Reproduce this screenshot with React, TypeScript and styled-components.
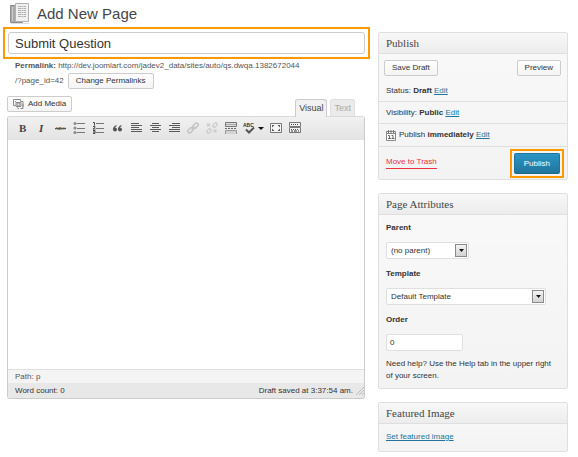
import React, { useState } from "react";
import styled, { createGlobalStyle, css } from "styled-components";

const GlobalStyle = createGlobalStyle`
  * { box-sizing: border-box; }
  body {
    margin: 0;
    background: #fff;
    color: #333;
    font: 8px/12px "Liberation Sans", Arial, sans-serif;
  }
  button, input, select { font-family: inherit; font-size: 8px; color: #333; margin: 0; }
  a { color: #21759b; }
  svg { display: block; }
`;

const Page = styled.div`
  padding: 0 10px 4px 3px;
`;

const PageHeader = styled.header`
  display: flex;
  align-items: center;
  gap: 7px;
  height: 27px;
  padding-left: 7px;
`;

const PageTitle = styled.h1`
  margin: 0;
  font-size: 15px;
  line-height: 24px;
  font-weight: 400;
  color: #464646;
`;

const Columns = styled.div`
  display: flex;
  align-items: flex-start;
  gap: 8px;
`;

const Main = styled.main`
  flex: 1;
  min-width: 0;
`;

const Highlight = styled.div`
  border: 2px solid #f90;
`;

const TitleHighlight = styled(Highlight)`
  padding: 3px;
`;

const TitleInput = styled.input`
  display: block;
  width: 100%;
  height: 22px;
  padding: 0 6px;
  border: 1px solid #ccc;
  border-radius: 3px;
  background: #fff;
  font-size: 13px;
  color: #333;
  outline: none;
`;

const Permalink = styled.div`
  padding: 0 12px;
  line-height: 14px;
  color: #555;
`;

const PermalinkRow = styled.div`
  display: flex;
  align-items: center;
  gap: 4px;
`;

const Button = styled.button<{ $icon?: boolean }>`
  display: inline-flex;
  align-items: center;
  justify-content: center;
  gap: 4px;
  height: 16px;
  padding: 0 ${(p) => (p.$icon ? 5 : 7)}px;
  border: 1px solid #ccc;
  border-radius: 2px;
  background: linear-gradient(#fefefe, #f4f4f4);
  line-height: 14px;
  white-space: nowrap;
`;

const EditorTools = styled.div`
  display: flex;
  justify-content: space-between;
  align-items: flex-start;
  height: 27px;
  padding: 7px 15px 0 4px;
`;

const Tabs = styled.div`
  display: flex;
  gap: 3px;
  padding-top: 3px;
`;

const Tab = styled.button<{ $active: boolean }>`
  position: relative;
  height: ${(p) => (p.$active ? 18 : 17)}px;
  padding: 0 3px;
  border: 1px solid ${(p) => (p.$active ? "#ccc" : "#dfdfdf")};
  border-bottom: 0;
  border-radius: 3px 3px 0 0;
  background: ${(p) => (p.$active ? "#f1f1f1" : "#ebebeb")};
  color: ${(p) => (p.$active ? "#444" : "#aaa")};
  font-size: 9px;
  line-height: 17px;
`;

const Editor = styled.section`
  margin: 0 5px 0 4px;
  border: 1px solid #ccc;
  border-top-color: #dadada;
  border-radius: 3px;
  overflow: hidden;
`;

const Toolbar = styled.div`
  display: flex;
  align-items: center;
  height: 23px;
  padding-left: 5px;
  background: linear-gradient(#f1f1f1, #e3e3e3);
`;

const ToolButton = styled.button<{ $menu?: boolean }>`
  display: flex;
  align-items: center;
  justify-content: center;
  width: ${(p) => (p.$menu ? 26 : 19)}px;
  height: 23px;
  padding: 0 0 1px;
  border: 0;
  background: none;
`;

const Canvas = styled.div`
  height: 229px;
  background: #fff;
  outline: none;
`;

const PathBar = styled.div`
  height: 14px;
  padding: 0 7px;
  border-top: 1px solid #dfdfdf;
  background: #f4f4f4;
  line-height: 14px;
  color: #555;
`;

const StatusBar = styled.div`
  display: flex;
  align-items: center;
  justify-content: space-between;
  height: 15px;
  padding: 0 0 0 7px;
  background: #e8e8e8;
`;

const SavedNote = styled.span`
  display: flex;
  align-items: center;
  gap: 2px;
`;

const Sidebar = styled.aside`
  display: flex;
  flex-direction: column;
  gap: 13px;
  width: 190px;
  padding-top: 5px;
`;

const Panel = styled.section`
  border: 1px solid #dfdfdf;
  border-radius: 2px;
  background: linear-gradient(#f9f9f9, #f3f3f3);
`;

const PanelTitle = styled.h2`
  margin: 0;
  height: 21px;
  padding: 0 7px;
  border-bottom: 1px solid #dfdfdf;
  background: linear-gradient(#f8f8f8, #ececec);
  font: 400 11px/21px "Liberation Serif", Georgia, serif;
  color: #464646;
`;

const ButtonRow = styled.div`
  display: flex;
  justify-content: space-between;
  padding: 6px 6px 0 5px;
`;

const InfoRow = styled.div<{ $height: number }>`
  display: flex;
  align-items: center;
  gap: 3px;
  height: ${(p) => p.$height}px;
  padding: 0 7px;
  border-bottom: 1px solid #dfdfdf;

  ${ButtonRow} + & {
    padding-top: 4px;
  }
`;

const Actions = styled.div`
  display: flex;
  justify-content: space-between;
  align-items: flex-start;
  padding: 2px 3px 1px 7px;
`;

const TrashLink = styled.a`
  margin-top: 7px;
  border-bottom: 1px solid #f03040;
  color: #f03040;
  text-decoration: none;
`;

const PublishHighlight = styled(Highlight)`
  padding: 2px;
`;

const PrimaryButton = styled.button`
  display: block;
  height: 21px;
  padding: 0 9px;
  border: 1px solid #21759b;
  border-bottom-color: #1e6a8d;
  border-radius: 2px;
  background: linear-gradient(#2a95c5, #21759b);
  color: #fff;
`;

const Fields = styled.div`
  display: flex;
  flex-direction: column;
  align-items: flex-start;
  padding: 7px 7px 6px;
`;

const Label = styled.label`
  font-weight: 700;
  margin-bottom: 8px;
`;

const control = css`
  height: 17px;
  border: 1px solid #dfdfdf;
  border-radius: 2px;
  background: #fff;
  outline: none;
`;

const SelectWrap = styled.div<{ $full?: boolean }>`
  position: relative;
  width: ${(p) => (p.$full ? "92%" : "83px")};
  margin-bottom: 9px;
`;

const Select = styled.select`
  ${control}
  display: block;
  appearance: none;
  width: 100%;
  padding: 0 16px 0 4px;
`;

const SelectArrow = styled.span`
  position: absolute;
  top: 2px;
  right: 2px;
  display: flex;
  align-items: center;
  justify-content: center;
  width: 12px;
  height: 13px;
  border: 1px solid #8a8a8a;
  background: linear-gradient(#f4f4f4, #d2d2d2);
  pointer-events: none;
`;

const OrderInput = styled.input`
  ${control}
  width: 77px;
  padding: 0 3px;
  margin-bottom: 7px;
`;

const Help = styled.p`
  margin: 0;
  padding-right: 6px;
`;

const PanelBody = styled.div`
  padding: 7px 7px 8px;
`;

const DOC_LINES = [4, 6, 8, 10, 12, 14];

function PagesIcon() {
  return (
    <svg width="20" height="22" viewBox="0 0 20 22" aria-hidden="true">
      <path d="M.5 2.500h12v17h-12z" fill="#a9a9a9" stroke="#8f8f8f" />
      <path d="M2.500 4v14" stroke="#ccc" />
      <path d="M5.500.5h13v18h-13z" fill="#f0f0f0" stroke="#b0b0b0" />
      {DOC_LINES.map((y) => (
        <path key={y} d={`M8 ${y - 0.5}h8`} stroke="#b0b0b0" strokeDasharray="3 .5 2 .5" />
      ))}
      <path d="M1 20.500h18" stroke="#ddd" />
    </svg>
  );
}

function MediaIcon() {
  return (
    <svg width="11" height="11" viewBox="0 0 11 11" fill="none" stroke="#888" aria-hidden="true">
      <path d="M.5.500h7v1.500M.5.500v6h2M2 2.500h1M7.500 2.500h2.500v5" />
      <path d="M3 3.500h5v4h-5z" fill="#eee" />
      <circle cx="5.500" cy="5.500" r="1.300" />
      <path d="M10 5v4.500M7.500 9.500h2.500M4 8.500l2 1.500" />
    </svg>
  );
}

function CalendarIcon() {
  return (
    <svg width="10" height="11" viewBox="0 0 10 11" aria-hidden="true">
      <path d="M.5 1.500h9v9h-9z" fill="#fff" stroke="#888" />
      <path d="M1 3.500h8" stroke="#888" />
      <path d="M2.500 0v3M5 0v3M7.500 0v3" stroke="#777" />
      <path d="M2 5.500h1.500v3M2 8.500h3M5.500 5.500h1.500v3M5.500 8.500h3" stroke="#666" fill="none" />
    </svg>
  );
}

function GripIcon() {
  return (
    <svg width="9" height="9" viewBox="0 0 9 9" stroke="#bbb" aria-hidden="true">
      <path d="M1 9L9 1M4 9l5-5M7 9l2-2" />
    </svg>
  );
}

type Tool = { name: string; menu?: boolean; art: React.ReactNode };

const serif = '"Liberation Serif", serif';
const rows = (list: number[][]) =>
  list.map(([x, y, w], i) => <path key={i} d={`M${x} ${y + 0.5}h${w}`} stroke="#5a5a5a" />);

const TOOLS: Tool[] = [
  { name: "Bold", art: <text x="3" y="10" fontFamily={serif} fontSize="11" fontWeight="700" fill="#444">B</text> },
  { name: "Italic", art: <text x="4" y="10" fontFamily={serif} fontSize="11" fontWeight="700" fontStyle="italic" fill="#444">I</text> },
  { name: "Strikethrough", art: <><text x="1" y="8" fontFamily={serif} fontSize="5" fontWeight="700" fill="#555">ABC</text><path d="M1 6.500h11" stroke="#555" /></> },
  { name: "Bulleted list", art: <><g fill="#888"><circle cx="2" cy="1.500" r="1.500" /><circle cx="2" cy="6" r="1.500" /><circle cx="2" cy="10.500" r="1.500" /></g><path d="M4 1.500h8M4 6.500h8M4 10.500h8" stroke="#777" /></> },
  { name: "Numbered list", art: <><path d="M1 .5h1.500v3M1 4.500h2v1l-2 1.500h2.500M1 8.500h2v3h-2M1 10h2" fill="none" stroke="#444" /><path d="M4 1.500h8M4 6.500h8M4 10.500h8" stroke="#777" /></> },
  { name: "Blockquote", art: <g fill="#555"><circle cx="4" cy="7.500" r="2" /><circle cx="9" cy="7.500" r="2" /><path d="M2 7.500Q2 4 5.500 3v1Q3.500 5 4 7zM7 7.500Q7 4 10.500 3v1Q8.500 5 9 7z" /></g> },
  { name: "Align left", art: rows([[1, 1, 8], [1, 3, 11], [1, 5, 8], [1, 7, 11], [1, 9, 11]]) },
  { name: "Align center", art: rows([[3, 1, 7], [1, 3, 11], [3, 5, 7], [1, 7, 11], [3, 9, 7]]) },
  { name: "Align right", art: rows([[4, 1, 8], [1, 3, 11], [4, 5, 8], [1, 7, 11], [1, 9, 11]]) },
  { name: "Insert link", art: <g fill="none" stroke="#c4c4c4" strokeWidth="1.500"><rect x="5.500" y="2" width="6" height="3.500" rx="1.700" transform="rotate(-45 8.500 3.700)" /><rect x=".5" y="6.500" width="6" height="3.500" rx="1.700" transform="rotate(-45 3.500 8.200)" /><path d="M4.500 7.500l3-3" /></g> },
  { name: "Remove link", art: <g fill="none" stroke="#ccc" strokeWidth="1.200"><rect x="6.500" y="1.500" width="5" height="3" rx="1.500" transform="rotate(-45 9 3)" /><rect x=".5" y="7.500" width="5" height="3" rx="1.500" transform="rotate(-45 3 9)" /><path d="M1 1.500l3 3M4 1.500l-3 3M7.500 7.500l3 3M10.500 7.500l-3 3" /></g> },
  { name: "Insert more tag", art: <><path d="M.5.500h11v4H.5z" fill="#ddd" stroke="#777" /><path d="M1 2.500h10" stroke="#aaa" /><path d="M0 6.500h12" stroke="#666" strokeDasharray="2 1" /><path d="M1 9h10v3H1z" fill="#d2d2d2" /><path d="M.5 12V8.500h11V12" fill="none" stroke="#999" /></> },
  { name: "Proofread", menu: true, art: <><text x="0" y="4.500" fontFamily='"Liberation Sans", sans-serif' fontSize="5" fontWeight="700" fill="#333">ABC</text><path d="M3 7.500l3 3 5-5" fill="none" stroke="#555" strokeWidth="2" /><path d="M15 5h6l-3 3z" fill="#111" /></> },
  { name: "Fullscreen", art: <><path d="M.5 1.500h11v9H.5z" fill="#f6f6f6" stroke="#777" /><path d="M2 3h2.500L2 5.500zM10 3H7.500L10 5.500zM2 9h2.500L2 6.500zM10 9H7.500L10 6.500z" fill="#555" /></> },
  { name: "Kitchen sink", art: <><path d="M.5.500h11v4H.5zM.5 5.500h11v5H.5z" fill="#f2f2f2" stroke="#777" /><path d="M2 2.500h8" stroke="#444" strokeDasharray="1 1" /><path d="M2 7.500h8" stroke="#555" strokeDasharray="1 1" /><path d="M2 9h8" stroke="#333" strokeDasharray="2 1 3 1" /></> },
];

function Dropdown({ id, label, value, full }: { id: string; label: string; value: string; full?: boolean }) {
  return (
    <>
      <Label htmlFor={id}>{label}</Label>
      <SelectWrap $full={full}>
        <Select id={id}>
          <option>{value}</option>
        </Select>
        <SelectArrow>
          <svg width="5" height="3" viewBox="0 0 5 3" aria-hidden="true">
            <path d="M0 0h5L2.500 3z" fill="#111" />
          </svg>
        </SelectArrow>
      </SelectWrap>
    </>
  );
}

export default function App() {
  const [tab, setTab] = useState("Visual");
  return (
    <>
      <GlobalStyle />
      <Page>
        <PageHeader>
          <PagesIcon />
          <PageTitle>Add New Page</PageTitle>
        </PageHeader>
        <Columns>
          <Main>
            <TitleHighlight>
              <TitleInput aria-label="Title" defaultValue="Submit Question" />
            </TitleHighlight>
            <Permalink>
              <div><b>Permalink:</b> http://dev.joomlart.com/jadev2_data/sites/auto/qs.dwqa.1382672044</div>
              <PermalinkRow>
                <span>/?page_id=42</span>
                <Button>Change Permalinks</Button>
              </PermalinkRow>
            </Permalink>
            <EditorTools>
              <Button $icon><MediaIcon />Add Media</Button>
              <Tabs>
                {["Visual", "Text"].map((name) => (
                  <Tab key={name} $active={tab === name} onClick={() => setTab(name)}>{name}</Tab>
                ))}
              </Tabs>
            </EditorTools>
            <Editor>
              <Toolbar>
                {TOOLS.map((t) => (
                  <ToolButton key={t.name} aria-label={t.name} $menu={t.menu}>
                    <svg width={t.menu ? 22 : 13} height="12" viewBox={t.menu ? "0 0 22 12" : "0 0 13 12"}>{t.art}</svg>
                  </ToolButton>
                ))}
              </Toolbar>
              <Canvas contentEditable suppressContentEditableWarning role="textbox" aria-label="Page content" />
              <PathBar>Path: p</PathBar>
              <StatusBar>
                <span>Word count: 0</span>
                <SavedNote>Draft saved at 3:37:54 am.<GripIcon /></SavedNote>
              </StatusBar>
            </Editor>
          </Main>
          <Sidebar>
            <Panel>
              <PanelTitle>Publish</PanelTitle>
              <ButtonRow>
                <Button>Save Draft</Button>
                <Button>Preview</Button>
              </ButtonRow>
              <InfoRow $height={26}><span>Status: <b>Draft</b> <a href="#status">Edit</a></span></InfoRow>
              <InfoRow $height={22}><span>Visibility: <b>Public</b> <a href="#visibility">Edit</a></span></InfoRow>
              <InfoRow $height={23}><CalendarIcon /><span>Publish <b>immediately</b> <a href="#schedule">Edit</a></span></InfoRow>
              <Actions>
                <TrashLink href="#trash">Move to Trash</TrashLink>
                <PublishHighlight><PrimaryButton>Publish</PrimaryButton></PublishHighlight>
              </Actions>
            </Panel>
            <Panel>
              <PanelTitle>Page Attributes</PanelTitle>
              <Fields>
                <Dropdown id="parent" label="Parent" value="(no parent)" />
                <Dropdown id="template" label="Template" value="Default Template" full />
                <Label htmlFor="order">Order</Label>
                <OrderInput id="order" defaultValue="0" />
                <Help>Need help? Use the Help tab in the upper right of your screen.</Help>
              </Fields>
            </Panel>
            <Panel>
              <PanelTitle>Featured Image</PanelTitle>
              <PanelBody><a href="#featured">Set featured image</a></PanelBody>
            </Panel>
          </Sidebar>
        </Columns>
      </Page>
    </>
  );
}
